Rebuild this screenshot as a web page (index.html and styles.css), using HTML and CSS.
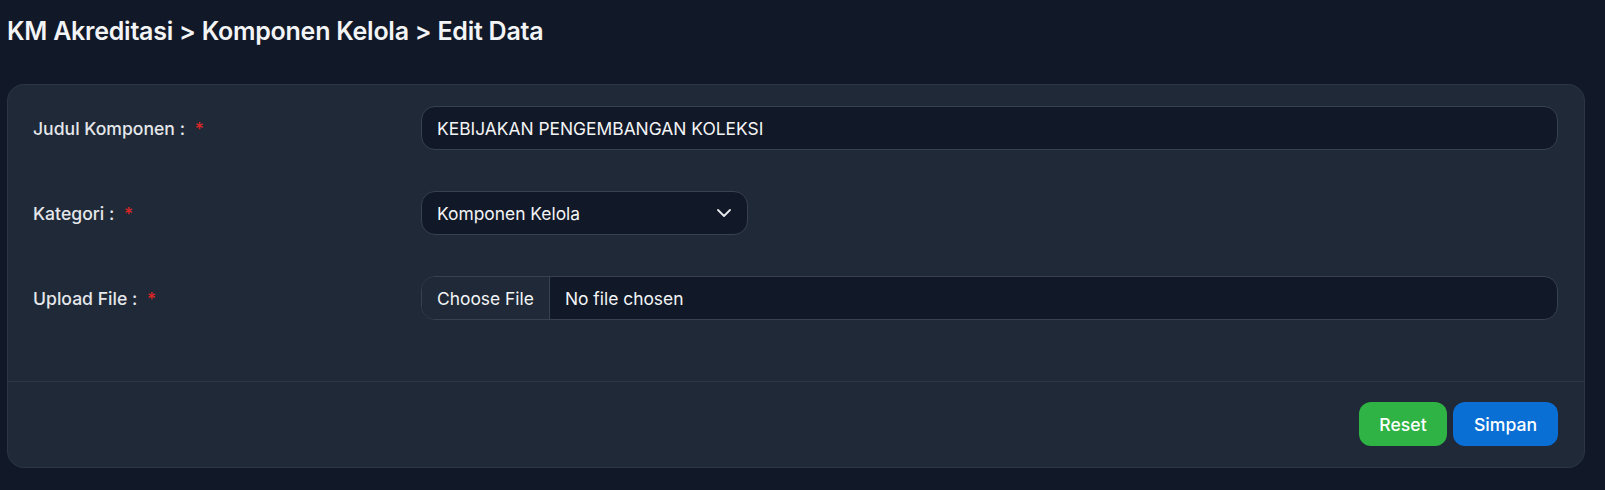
FILE: index.html
```html
<!DOCTYPE html>
<html lang="id">
<head>
<meta charset="utf-8">
<title>Edit Data</title>
<link rel="stylesheet" href="styles.css">
</head>
<body>
<main class="page">
  <h1 class="title">KM Akreditasi &gt; Komponen Kelola &gt; Edit Data</h1>
  <section class="card">
    <div class="card-body">
      <div class="row">
        <label class="label">Judul Komponen : <span class="req">*</span></label>
        <div class="field">
          <div class="input">KEBIJAKAN PENGEMBANGAN KOLEKSI</div>
        </div>
      </div>
      <div class="row">
        <label class="label">Kategori : <span class="req">*</span></label>
        <div class="field">
          <div class="select">
            <span>Komponen Kelola</span>
            <svg class="chev" width="14" height="8" viewBox="0 0 14 8"><path d="M1 1l6 6 6-6" fill="none" stroke="#e5e7eb" stroke-width="1.8" stroke-linecap="round" stroke-linejoin="round"/></svg>
          </div>
        </div>
      </div>
      <div class="row">
        <label class="label">Upload File : <span class="req">*</span></label>
        <div class="field">
          <div class="file">
            <span class="file-btn">Choose File</span>
            <span class="file-name">No file chosen</span>
          </div>
        </div>
      </div>
    </div>
    <div class="card-footer">
      <button class="btn btn-reset">Reset</button>
      <button class="btn btn-save">Simpan</button>
    </div>
  </section>
</main>
</body>
</html>
```
FILE: styles.css
```css
* { box-sizing: border-box; }
html, body { margin: 0; padding: 0; }
body {
  background: #111827;
  color: #f3f4f6;
  font-family: Inter, "Noto Sans", sans-serif;
  width: 1605px;
  height: 490px;
  overflow: hidden;
}
.page {
  padding: 15px 20px 0 7px;
}
.title {
  margin: 0 0 37px;
  font-size: 25px;
  line-height: 32px;
  font-weight: 600;
  color: #f3f4f6;
  letter-spacing: -0.25px;
}
.card {
  background: #1f2937;
  border: 1px solid #2c3646;
  border-radius: 17px;
}
.card-body {
  padding: 21px 26px 20px 25px;
}
.row {
  display: grid;
  grid-template-columns: 388px 1fr;
  align-items: center;
  margin-bottom: 41px;
}
.label {
  font-size: 17.6px;
  font-weight: 500;
  color: #e5e7eb;
}
.req {
  color: #dc2626;
  margin-left: 5px;
}
.input, .select, .file {
  height: 44px;
  background: #111827;
  border: 1px solid #374151;
  border-radius: 14px;
  font-size: 17.4px;
  color: #f3f4f6;
  display: flex;
  align-items: center;
}
.input {
  padding: 0 15px;
}
.select {
  width: 327px;
  padding: 0 15px;
  justify-content: space-between;
}
.chev { margin-right: 1px; }
.file { overflow: hidden; }
.file-btn {
  height: 100%;
  display: flex;
  align-items: center;
  padding: 0 15px;
  background: #1f2937;
  border-right: 1px solid #374151;
}
.file-name {
  padding-left: 15px;
}
.card-footer {
  border-top: 1px solid #2c3646;
  padding: 20px 26px 21px;
  display: flex;
  justify-content: flex-end;
  gap: 6px;
}
.btn {
  height: 44px;
  border: 0;
  border-radius: 12px;
  color: #ffffff;
  font-family: Inter, "Noto Sans", sans-serif;
  font-size: 17.6px;
  font-weight: 500;
  padding: 0;
}
.btn-reset { background: #2fb344; width: 88px; }
.btn-save { background: #0a6fd4; width: 105px; }
```
